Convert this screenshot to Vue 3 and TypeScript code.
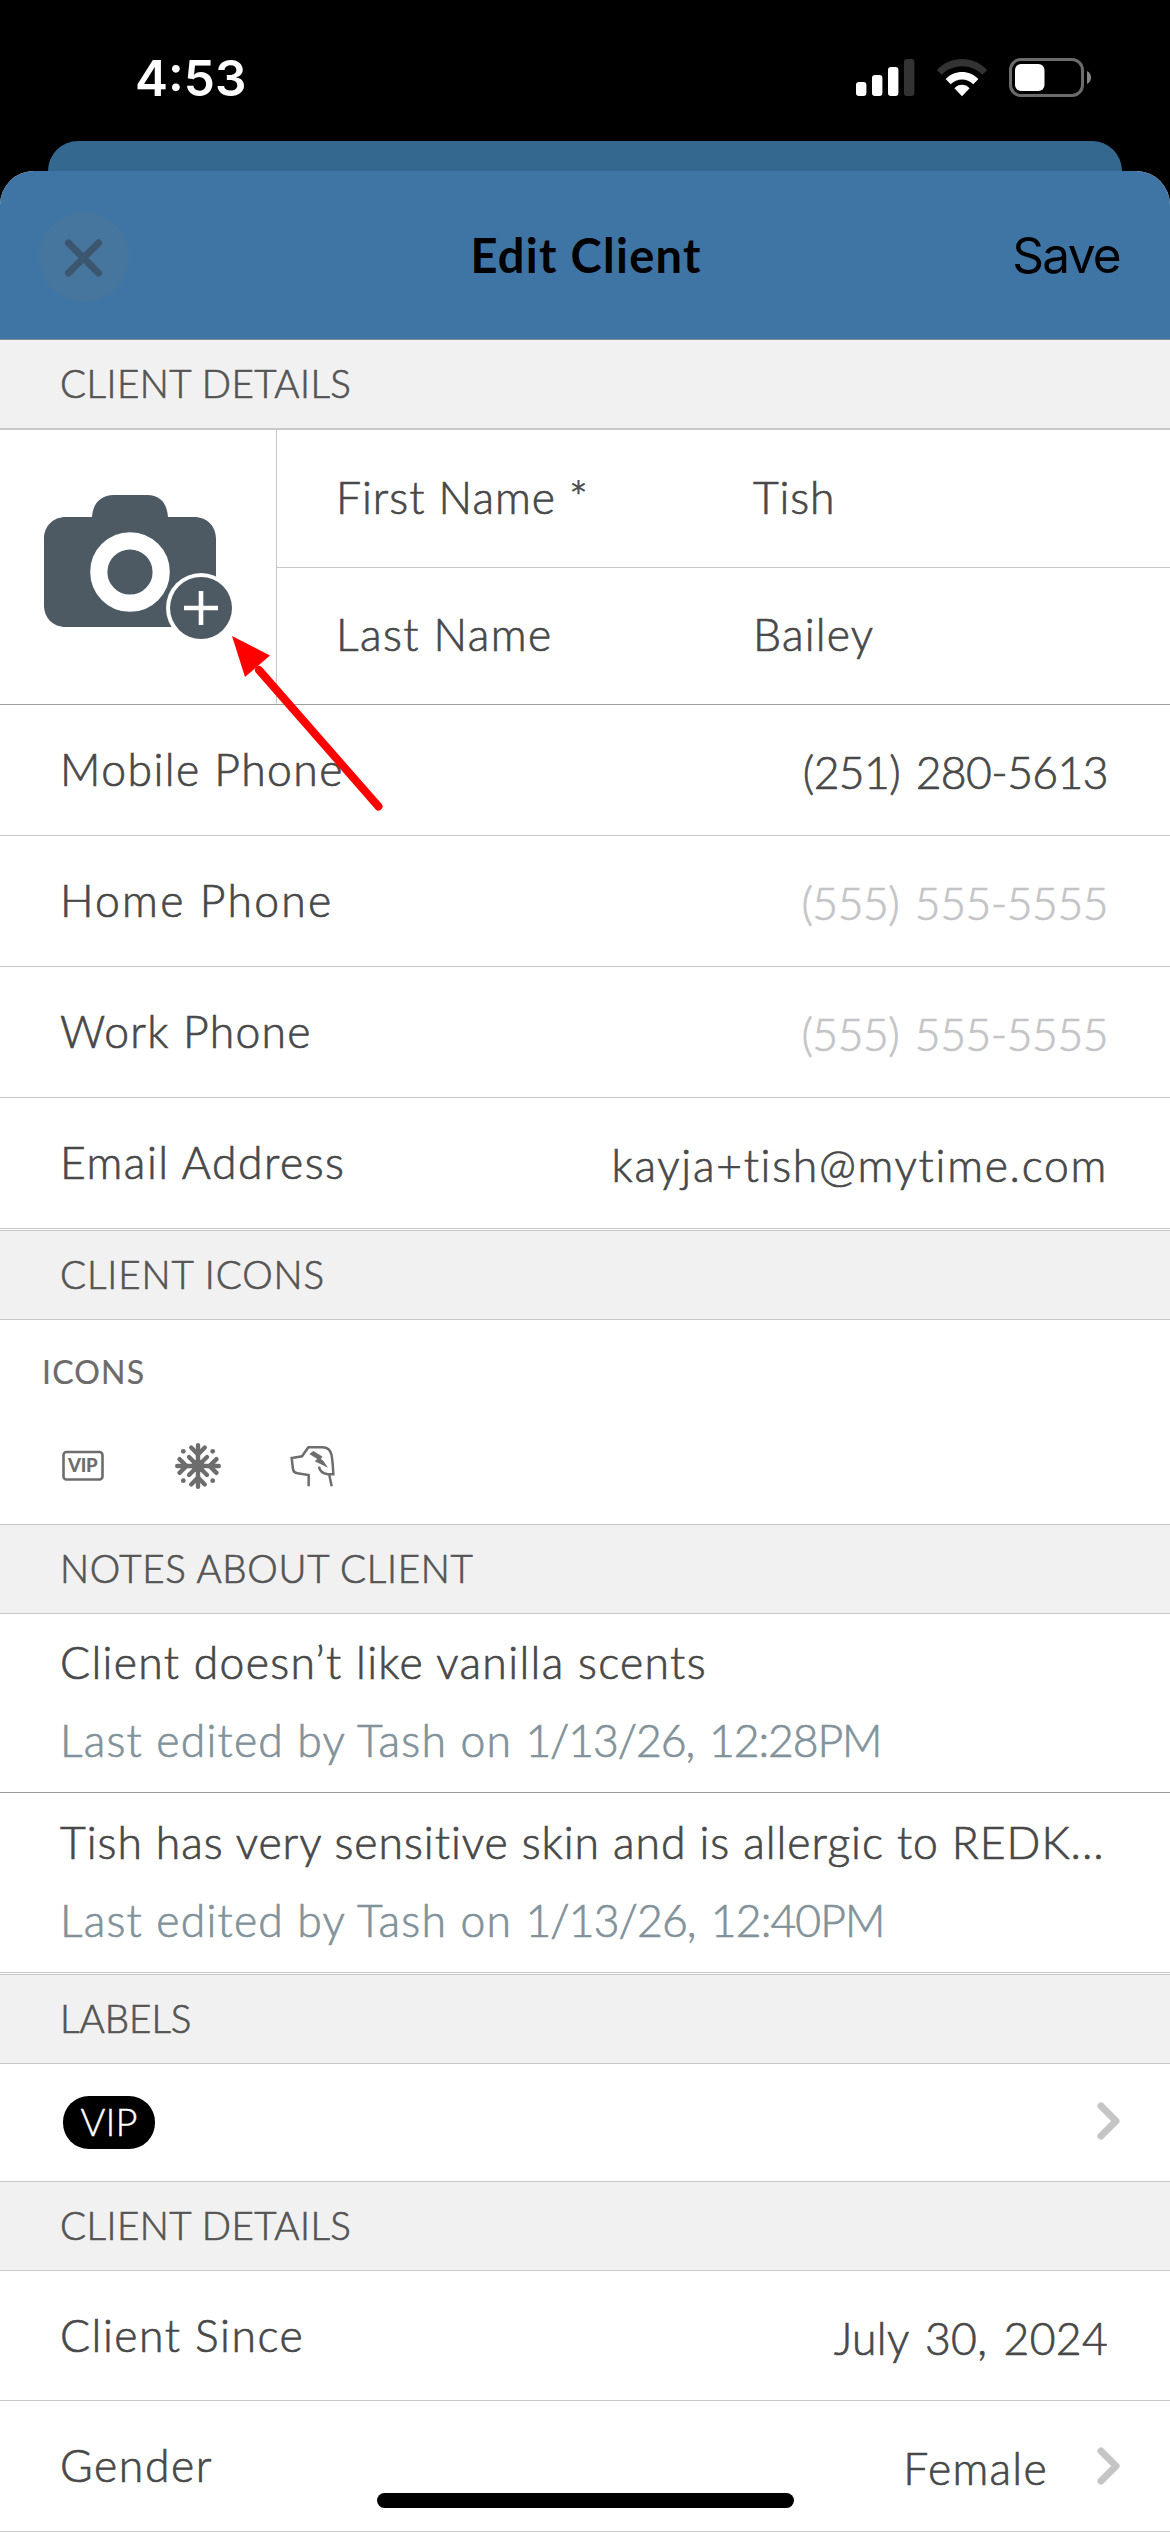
<script setup lang="ts">
interface Field {
  label: string
  value: string
  labelTrack: number
  valueTrack: number
  placeholder?: boolean
  chevron?: boolean
}

interface Note {
  text: string
  author: string
  date: string
  textTrack: number
  dateTrack: number
}

const names: Field[] = [
  { label: 'First Name *', value: 'Tish', labelTrack: 1, valueTrack: 0.8 },
  { label: 'Last Name', value: 'Bailey', labelTrack: 1.45, valueTrack: 1.2 },
]

const contacts: Field[] = [
  { label: 'Mobile Phone', value: '(251) 280-5613', labelTrack: 1.45, valueTrack: -0.6 },
  { label: 'Home Phone', value: '(555) 555-5555', labelTrack: 2.2, valueTrack: -0.5, placeholder: true },
  { label: 'Work Phone', value: '(555) 555-5555', labelTrack: 1.25, valueTrack: -0.5, placeholder: true },
  { label: 'Email Address', value: 'kayja+tish@mytime.com', labelTrack: 1.5, valueTrack: 1.7 },
]

const notes: Note[] = [
  {
    text: 'Client doesn’t like vanilla scents',
    author: 'Last edited by Tash on ',
    date: '1/13/26, 12:28PM',
    textTrack: 1.32,
    dateTrack: -1.1,
  },
  {
    text: 'Tish has very sensitive skin and is allergic to REDK...',
    author: 'Last edited by Tash on ',
    date: '1/13/26, 12:40PM',
    textTrack: 0.96,
    dateTrack: -0.9,
  },
]

const details: Field[] = [
  { label: 'Client Since', value: 'July 30, 2024', labelTrack: 1.5, valueTrack: 0.3 },
  { label: 'Gender', value: 'Female', labelTrack: 1.6, valueTrack: 1.3, chevron: true },
]

const track = (px: number) => ({ letterSpacing: `${px}px` })
</script>

<template>
  <div class="screen">
    <header class="status">
      <span class="clock">4:53</span>
      <div class="indicators">
        <svg class="signal" width="59" height="38" viewBox="0 0 59 38">
          <rect x="0" y="23" width="10.4" height="14" rx="3" fill="#fff" />
          <rect x="16" y="16" width="10.4" height="21" rx="3" fill="#fff" />
          <rect x="32" y="8" width="10.4" height="29" rx="3" fill="#fff" />
          <rect x="48" y="0" width="10.4" height="37" rx="3" fill="#333" />
        </svg>
        <svg class="wifi" width="52" height="38" viewBox="0 0 52 38">
          <path d="M0.8 11 C14.5 -3.6 37.5 -3.6 51.2 11 L46.4 15.8 C35.2 4.3 16.8 4.3 5.6 15.8 Z" fill="#333" />
          <path d="M9.6 20 C18.4 10.5 33.6 10.5 42.4 20 L37.3 25.2 C31.2 18.8 20.8 18.8 14.7 25.2 Z" fill="#fff" />
          <path d="M18.4 29.2 C22.5 24.6 29.5 24.6 33.6 29.2 L26 37.2 Z" fill="#fff" />
        </svg>
        <svg class="battery" width="83" height="40" viewBox="0 0 83 40">
          <rect x="1.5" y="1.5" width="72" height="36" rx="10.5" fill="none" stroke="#6b6b6b" stroke-width="3" />
          <rect x="6" y="6" width="29.5" height="27" rx="6" fill="#fff" />
          <path d="M78 13 C83.4 15.5 83.4 23.5 78 26 Z" fill="#858585" />
        </svg>
      </div>
    </header>

    <div class="back-sheet"></div>

    <main class="sheet">
      <nav class="navbar">
        <button class="close" aria-label="Close">
          <svg width="90" height="90" viewBox="0 0 90 90">
            <path d="M29.5 31 L59.5 61 M59.5 31 L29.5 61" stroke="#3d566f" stroke-width="7" stroke-linecap="round" />
          </svg>
        </button>
        <h1 class="title">Edit Client</h1>
        <span class="save">Save</span>
      </nav>

      <h2 class="section first"><span :style="track(0.45)">CLIENT DETAILS</span></h2>
      <div class="identity">
        <div class="photo">
          <svg width="276" height="274" viewBox="0 0 276 274">
            <path
              d="M66 87 H92 C93 73 101 65 114 65 H147 C160 65 167 73 168 87 H194 C207 87 216 96 216 109 V175 C216 188 207 197 194 197 H66 C53 197 44 188 44 175 V109 C44 96 53 87 66 87 Z"
              fill="#4e5a63"
            />
            <circle cx="130" cy="142" r="31.2" fill="none" stroke="#fff" stroke-width="17.2" />
            <circle cx="201" cy="178" r="35" fill="#fff" />
            <circle cx="201" cy="178" r="31" fill="#4e5a63" />
            <path d="M184 178 H218 M201 161 V195" stroke="#fff" stroke-width="4.6" />
          </svg>
        </div>
        <div class="names">
          <div v-for="f in names" :key="f.label" class="name-row">
            <span class="name-label" :style="track(f.labelTrack)">{{ f.label }}</span>
            <span :style="track(f.valueTrack)">{{ f.value }}</span>
          </div>
        </div>
        <svg class="pointer" width="160" height="190" viewBox="0 0 160 190">
          <path d="M34 36 L153.5 172.500" stroke="#f00" stroke-width="8" stroke-linecap="round" />
          <path d="M7 2 L45 21.5 L20 43 Z" fill="#f00" />
        </svg>
      </div>

      <div v-for="f in contacts" :key="f.label" class="row">
        <span class="label" :style="track(f.labelTrack)">{{ f.label }}</span>
        <span class="value" :class="{ placeholder: f.placeholder }" :style="track(f.valueTrack)">{{ f.value }}</span>
      </div>

      <h2 class="section after-row"><span :style="track(0.9)">CLIENT ICONS</span></h2>
      <div class="icons">
        <h3 class="icons-title">ICONS</h3>
        <div class="icon-list">
          <svg width="42" height="48" viewBox="0 0 42 48">
            <rect x="1.5" y="10" width="39" height="27.5" rx="3" fill="none" stroke="#6d6d6d" stroke-width="2.6" />
            <text x="6" y="30.2" textLength="29.5" class="vip-glyph">VIP</text>
          </svg>
          <svg width="48" height="48" viewBox="-24 -24 48 48">
            <g stroke="#6d6d6d" stroke-width="4.4" stroke-linecap="round" stroke-linejoin="round" fill="none">
              <path d="M0 -20.8 V20.8 M-20.8 0 H20.8 M-9 -9 L9 9 M9 -9 L-9 9" />
              <path d="M-6.8 -18.5 L0 -11.5 L6.8 -18.5 M-6.8 18.5 L0 11.5 L6.8 18.5" />
              <path d="M-18.5 -6.8 L-11.5 0 L-18.5 6.8 M18.5 -6.8 L11.5 0 L18.5 6.8" />
            </g>
            <g fill="#6d6d6d">
              <circle cx="0" cy="0" r="6.5" />
              <circle cx="-14.7" cy="-14.7" r="2.4" />
              <circle cx="14.7" cy="-14.7" r="2.4" />
              <circle cx="-14.7" cy="14.7" r="2.4" />
              <circle cx="14.7" cy="14.7" r="2.4" />
            </g>
          </svg>
          <svg width="48" height="48" viewBox="745 65 144 144">
            <g fill="none" stroke="#6d6d6d" stroke-width="7.5">
              <path d="M804 198 V164 L770 159 Q759 158 757 147 L753 113 L784 108 L803 81 H845 Q868 81 873 105 Q877 130 878 162 H862 Q837 158 835 139" />
              <path d="M866 164 L873 198" />
            </g>
            <path d="M806 101 L818 92 L846 109 L840 115 L849 123 L862 142 L822 123 L830 116 Z" fill="#6d6d6d" />
          </svg>
        </div>
      </div>

      <h2 class="section"><span :style="track(0.68)">NOTES ABOUT CLIENT</span></h2>
      <div v-for="n in notes" :key="n.date" class="note">
        <p class="note-text" :style="track(n.textTrack)">{{ n.text }}</p>
        <p class="note-meta">
          <span :style="track(1.2)">{{ n.author }}</span><span class="date" :style="track(n.dateTrack)">{{ n.date }}</span>
        </p>
      </div>

      <h2 class="section after-row"><span :style="track(0)">LABELS</span></h2>
      <div class="labels">
        <span class="pill">VIP</span>
        <svg class="chevron" width="24" height="38" viewBox="0 0 24 38">
          <path d="M4 4 L19 19 L4 34" />
        </svg>
      </div>

      <h2 class="section"><span :style="track(0.45)">CLIENT DETAILS</span></h2>
      <div v-for="f in details" :key="f.label" class="row detail">
        <span class="label" :style="track(f.labelTrack)">{{ f.label }}</span>
        <span class="value" :style="track(f.valueTrack)">{{ f.value }}</span>
        <svg v-if="f.chevron" class="chevron" width="24" height="38" viewBox="0 0 24 38">
          <path d="M4 4 L19 19 L4 34" />
        </svg>
      </div>
    </main>

    <div class="home-indicator"></div>
  </div>
</template>

<style>
body {
  margin: 0;
  background: #000;
}
</style>

<style scoped>
* {
  box-sizing: border-box;
}

.screen {
  position: relative;
  width: 1170px;
  height: 2532px;
  overflow: hidden;
  background: #000;
  color: #484848;
  font-family: Lato, 'Open Sans', sans-serif;
  font-size: 44.5px;
  font-weight: 300;
  white-space: nowrap;
  -webkit-text-stroke-width: 0.7px;
}

.status {
  display: flex;
  justify-content: space-between;
  height: 141px;
  padding: 58px 78px 0 135px;
}

.clock {
  height: 40px;
  color: #fff;
  font-family: Inter, sans-serif;
  font-size: 49.5px;
  font-weight: 600;
  line-height: 40px;
  -webkit-text-stroke-width: 0;
}

.indicators {
  display: flex;
  align-items: flex-start;
}

.signal,
.wifi {
  margin-top: 1px;
}

.wifi,
.battery {
  margin-left: 21px;
}

.back-sheet {
  height: 30px;
  margin: 0 48px;
  border-radius: 30px 30px 0 0;
  background: #34688f;
}

.sheet {
  border-radius: 34px 34px 0 0;
  background: #fff;
}

.navbar {
  display: flex;
  align-items: center;
  justify-content: space-between;
  height: 169px;
  padding: 3px 50px 0 39px;
  border-bottom: 1px solid #7d8b99;
  border-radius: 34px 34px 0 0;
  background: #3f75a5;
  color: #000;
  -webkit-text-stroke-width: 0;
}

.close {
  width: 90px;
  height: 90px;
  padding: 0;
  border: 0;
  border-radius: 50%;
  background: #46769d;
}

.title {
  margin: 0;
  padding: 0 0 3px 31px;
  font-size: 47px;
  font-weight: 700;
  letter-spacing: 1.3px;
}

.save {
  padding-bottom: 4px;
  font-family: Inter, sans-serif;
  font-size: 49.5px;
  font-weight: 400;
  letter-spacing: -1.7px;
}

.section {
  display: flex;
  align-items: center;
  height: 89px;
  margin: 0;
  padding: 0 0 2px 60px;
  border-bottom: 1px solid #c8c8c8;
  background: #f1f1f1;
  color: #555;
  font-size: 38.5px;
  font-weight: 300;
}

.section.first {
  height: 90px;
  border-bottom-width: 2px;
}

.section.after-row {
  height: 90px;
  margin-top: 1px;
  border-top: 1px solid #c8c8c8;
}

.identity {
  position: relative;
  display: flex;
  height: 275px;
  border-bottom: 1px solid #9f9f9f;
}

.photo {
  width: 277px;
  border-right: 1px solid #c8c8c8;
}

.photo svg {
  display: block;
}

.names {
  flex: 1;
}

.name-row {
  display: flex;
  align-items: center;
  height: 137px;
  padding: 0 0 5px 59px;
}

.name-row + .name-row {
  border-top: 1px solid #c8c8c8;
}

.name-label {
  width: 417px;
}

.pointer {
  position: absolute;
  top: 204px;
  left: 225px;
  z-index: 1;
}

.row {
  display: flex;
  align-items: center;
  height: 131px;
  padding: 0 62px 0 60px;
  border-bottom: 1px solid #c8c8c8;
}

.row.detail:nth-last-child(2) {
  height: 130px;
}

.label {
  flex: 1;
  padding-bottom: 3px;
}

.value {
  padding-top: 3px;
  word-spacing: 4px;
}

.date {
  word-spacing: 4px;
}

.placeholder {
  color: #c4c4c6;
}

.icons {
  height: 205px;
  padding-top: 30px;
  border-bottom: 1px solid #c8c8c8;
}

.icons-title {
  margin: 0 0 0 42px;
  color: #6b6b6b;
  font-size: 32px;
  font-weight: 400;
  line-height: 44px;
  letter-spacing: 1.2px;
  -webkit-text-stroke-width: 0.2px;
}

.icon-list {
  display: flex;
  gap: 67px;
  margin: 48px 0 0 62px;
}

.icon-list svg:first-child {
  margin-right: 3px;
}

.vip-glyph {
  fill: #6d6d6d;
  font-family: Lato, sans-serif;
  font-size: 18.5px;
  font-weight: 900;
  -webkit-text-stroke-width: 0;
}

.note {
  height: 179px;
  padding: 27px 60px 0;
  border-bottom: 1px solid #999;
}

.note + .note {
  height: 180px;
  padding-top: 28px;
  border-bottom-color: #c8c8c8;
}

.note p {
  margin: 0;
  line-height: 42px;
}

.note .note-meta {
  margin-top: 36px;
  color: #82929a;
  white-space: pre;
}

.labels {
  display: flex;
  align-items: center;
  justify-content: space-between;
  height: 118px;
  padding: 0 49px 0 63px;
  border-bottom: 1px solid #c8c8c8;
}

.labels .chevron {
  margin-bottom: 3px;
}

.pill {
  width: 92px;
  height: 53px;
  border-radius: 26px;
  background: #000;
  color: #fff;
  font-size: 38px;
  line-height: 51px;
  text-align: center;
  -webkit-text-stroke-width: 0.4px;
}

.chevron {
  fill: none;
  stroke: #c5c5c7;
  stroke-width: 7;
  stroke-linecap: round;
  stroke-linejoin: round;
}

.row .chevron {
  margin: 0 -13px 0 49px;
}

.home-indicator {
  position: absolute;
  top: 2493px;
  left: 377px;
  width: 417px;
  height: 15px;
  border-radius: 8px;
  background: #000;
}
</style>
